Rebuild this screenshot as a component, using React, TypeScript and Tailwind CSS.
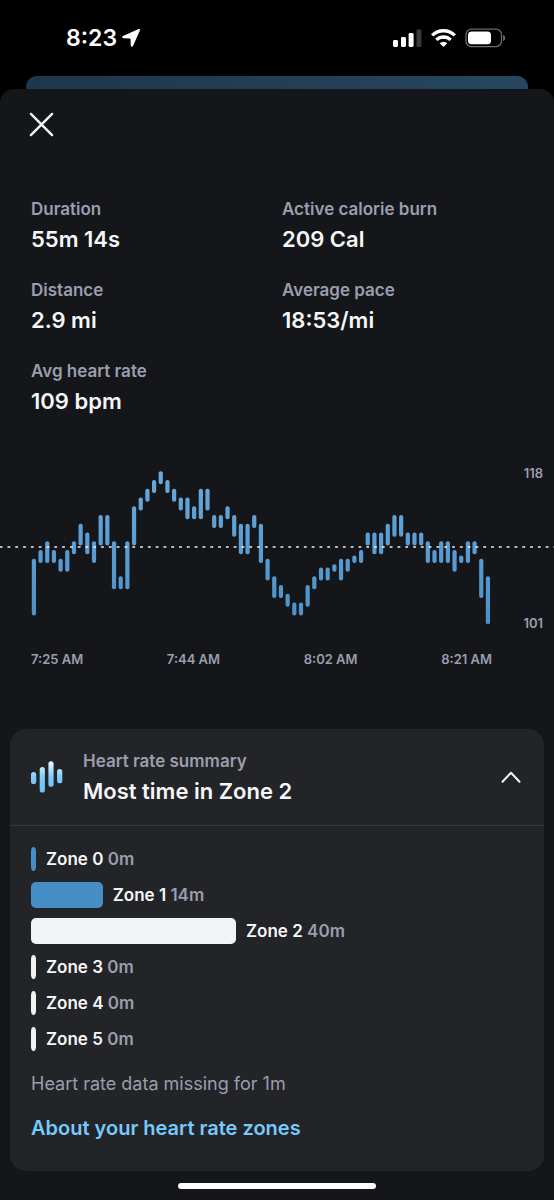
import { useState } from 'react'

interface Stat {
  label: string
  value: string
}

interface Zone {
  name: string
  minutes: number
  color: string
}

const stats: Stat[] = [
  { label: 'Duration', value: '55m 14s' },
  { label: 'Active calorie burn', value: '209 Cal' },
  { label: 'Distance', value: '2.9 mi' },
  { label: 'Average pace', value: '18:53/mi' },
  { label: 'Avg heart rate', value: '109 bpm' },
]

const zones: Zone[] = [
  { name: 'Zone 0', minutes: 0, color: 'bg-[#458fc6]' },
  { name: 'Zone 1', minutes: 14, color: 'bg-[#458fc6]' },
  { name: 'Zone 2', minutes: 40, color: 'bg-[#f2f3f5]' },
  { name: 'Zone 3', minutes: 0, color: 'bg-[#f2f3f5]' },
  { name: 'Zone 4', minutes: 0, color: 'bg-[#f2f3f5]' },
  { name: 'Zone 5', minutes: 0, color: 'bg-[#f2f3f5]' },
]

// [high, low] bpm for every interval of the workout
const heartRate: [number, number][] = [
  [108, 102], [109, 108], [110, 108], [109, 108], [108, 107], [109, 107], [110, 109], [112, 110],
  [111, 109], [110, 108], [113, 110], [113, 110], [110, 105], [106, 105], [110, 105], [114, 110],
  [115, 114], [116, 115], [117, 116], [118, 117], [117, 116], [116, 115], [115, 114], [115, 113],
  [114, 113], [116, 113], [116, 114], [113, 112], [113, 112], [114, 113], [113, 111], [112, 109],
  [112, 109], [113, 112], [112, 108], [108, 106], [106, 104], [105, 104], [104, 103], [103, 102],
  [103, 102], [105, 103], [106, 105], [107, 106], [107, 106], [107, 107], [108, 106], [108, 107],
  [108, 108], [109, 108], [111, 110], [111, 109], [111, 109], [112, 110], [113, 111], [113, 111],
  [111, 110], [111, 110], [111, 110], [110, 108], [109, 108], [110, 108], [110, 108], [109, 107],
  [108, 108], [110, 108], [110, 109], [108, 104], [106, 101],
]

const times = ['7:25 AM', '7:44 AM', '8:02 AM', '8:21 AM']

const MAX_BPM = 118
const BPM_STEP = 8.75
const BAR_STEP = 6.677

function StatusBar() {
  return (
    <div className="flex h-[76px] items-center justify-between pl-[66px] pr-12">
      <div className="flex items-center gap-1 text-[23px] font-semibold leading-7 text-white">
        <span>8:23</span>
        <svg width="20" height="20" viewBox="0 0 20 20" fill="white" aria-hidden="true">
          <path d="M17.6 1.1 2 8.1c-1.2.6-.9 2.1.4 2.2l6.6.3c.3 0 .5.2.5.5l.3 6.6c.1 1.3 1.7 1.6 2.2.4l6.9-15.6c.4-1-.3-1.8-1.3-1.4Z" />
        </svg>
      </div>
      <div className="flex items-center">
        <svg width="29" height="20" viewBox="0 0 29 20" fill="white" aria-hidden="true">
          <rect x="0" y="12" width="5" height="7" rx="1.4" />
          <rect x="8" y="9" width="5" height="10" rx="1.4" />
          <rect x="15.6" y="5" width="5" height="14" rx="1.4" />
          <rect x="23.5" y="1.5" width="5" height="17.5" rx="1.4" fill="#38383a" />
        </svg>
        <svg className="ml-[9px]" width="25" height="20" viewBox="0 0 25 20" fill="none" stroke="white" strokeWidth="3.4" aria-hidden="true">
          <path d="M1.2 7.4a16 16 0 0 1 22.6 0" />
          <path d="M5.4 11.9a10 10 0 0 1 14.2 0" />
          <path d="M12.5 19 8.7 15.2a5.4 5.4 0 0 1 7.6 0Z" fill="white" stroke="none" />
        </svg>
        <svg className="ml-[9px]" width="41" height="20" viewBox="0 0 41 20" fill="none" aria-hidden="true">
          <rect x="1" y="1.2" width="35.5" height="17.4" rx="5.4" stroke="#6b6b6b" strokeWidth="1.3" />
          <rect x="3" y="3.5" width="23" height="12.8" rx="3.6" fill="white" />
          <path d="M38.2 7v6c1.3-.5 1.9-1.6 1.9-3s-.6-2.5-1.9-3Z" fill="#757575" />
        </svg>
      </div>
    </div>
  )
}

function HeartRateChart() {
  return (
    <section aria-label="Heart rate" className="mt-12">
      <div className="grid">
        <svg className="col-start-1 row-start-1 w-full" viewBox="0 0 554 170" aria-hidden="true">
          <defs>
            <linearGradient id="bars" gradientUnits="userSpaceOnUse" x1="0" y1="8" x2="0" y2="162">
              <stop offset="0" stopColor="#6aa9dc" />
              <stop offset="1" stopColor="#4a90c8" />
            </linearGradient>
          </defs>
          {heartRate.map(([high, low], i) => {
            const bottom = 12.5 + (MAX_BPM - low) * BPM_STEP
            const height = Math.max((high - low) * BPM_STEP + 4.3, 7.5)
            return (
              <rect
                key={i}
                x={31.8 + i * BAR_STEP}
                y={bottom - height}
                width="4.2"
                height={height}
                rx="2"
                fill="url(#bars)"
              />
            )
          })}
          <line x1="0" y1="84" x2="554" y2="84" stroke="#eef0f2" strokeWidth="1.6" strokeDasharray="2.8 5" strokeDashoffset="0.3" />
        </svg>
        <div className="col-start-1 row-start-1 flex flex-col items-end justify-between pr-[11px] text-[13px] leading-5 font-semibold text-[#9a9eae]">
          <span>118</span>
          <span>101</span>
        </div>
      </div>
      <div className="mt-4 flex justify-between pl-[31px] pr-[62px] text-[13px] leading-5 font-semibold text-[#9a9eae]">
        {times.map((time) => (
          <span key={time}>{time}</span>
        ))}
      </div>
    </section>
  )
}

function ZoneRow({ zone }: { zone: Zone }) {
  return (
    <li className="flex h-[26px] items-center gap-[10px]">
      <div
        className={`min-w-[5px] shrink-0 ${zone.minutes > 0 ? 'h-[26px] rounded-[5px]' : 'h-6 rounded-[50%/20%]'} ${zone.color}`}
        style={{ width: `${zone.minutes / 0.96}%` }}
      />
      <p className="whitespace-nowrap text-[17px] leading-6 font-semibold text-[#f5f6f8]">
        {zone.name} <span className="text-[#9a9eae]">{zone.minutes}m</span>
      </p>
    </li>
  )
}

function HeartRateSummary() {
  const [open, setOpen] = useState(true)

  return (
    <section className="mx-[10px] mt-[60px] rounded-2xl bg-[#232428]">
      <button
        type="button"
        aria-expanded={open}
        onClick={() => setOpen(!open)}
        className="flex h-24 w-full items-center px-[21px] text-left"
      >
        <svg width="32" height="32" viewBox="0 0 32 32" aria-hidden="true">
          <defs>
            <linearGradient id="pulse" gradientUnits="userSpaceOnUse" x1="0" y1="0" x2="0" y2="31">
              <stop offset="0" stopColor="#f4f7fc" />
              <stop offset="0.5" stopColor="#7fcdfa" />
              <stop offset="1" stopColor="#6cc3f7" />
            </linearGradient>
          </defs>
          <g fill="url(#pulse)">
            <rect x="0" y="11" width="5.2" height="12" rx="2.6" />
            <rect x="8.7" y="6" width="5.2" height="25.5" rx="2.6" />
            <rect x="17.4" y="0.3" width="5.2" height="25.5" rx="2.6" />
            <rect x="26.1" y="8" width="5.2" height="14.3" rx="2.6" />
          </g>
        </svg>
        <span className="ml-5 flex-1">
          <span className="block text-[17px] leading-6 font-semibold text-[#9a9eae]">Heart rate summary</span>
          <span className="mt-1 block text-[22px] leading-7 font-semibold text-[#f5f6f8]">Most time in Zone 2</span>
        </span>
        <svg
          className={open ? '' : 'rotate-180'}
          width="24"
          height="24"
          viewBox="0 0 24 24"
          fill="none"
          stroke="#f5f6f8"
          strokeWidth="2"
          strokeLinecap="round"
          strokeLinejoin="round"
          aria-hidden="true"
        >
          <path d="m3.5 16.7 8.5-9 8.5 9" />
        </svg>
      </button>

      {open && (
        <div className="border-t border-[#36373c] px-[21px] pt-5 pb-[31px]">
          <ul className="space-y-[10px]">
            {zones.map((zone) => (
              <ZoneRow key={zone.name} zone={zone} />
            ))}
          </ul>
          <p className="mt-5 text-lg leading-6 text-[#9a9eae]">Heart rate data missing for 1m</p>
          <a href="#zones" className="mt-5 block text-xl leading-6 font-semibold text-[#75cbfb]">
            About your heart rate zones
          </a>
        </div>
      )}
    </section>
  )
}

export default function App() {
  return (
    <div className="flex min-h-screen flex-col bg-black font-['Inter',sans-serif]">
      <StatusBar />
      <div className="mx-[26px] h-[13px] rounded-t-[11px] bg-linear-to-r from-[#1d374c] to-[#26475f]" />
      <main className="flex flex-1 flex-col rounded-t-[14px] bg-[#15161a]">
        <div className="px-[29px] pt-[23px]">
          <button type="button" aria-label="Close" className="block">
            <svg width="25" height="25" viewBox="0 0 25 25" fill="none" stroke="#f5f6f8" strokeWidth="2.4" strokeLinecap="round" aria-hidden="true">
              <path d="m1.900 1.900 21.200 21.200M23.100 1.900 1.900 23.100" />
            </svg>
          </button>
        </div>

        <dl className="mt-[60px] grid grid-cols-2 gap-x-[10px] gap-y-[25px] px-[31px]">
          {stats.map((stat) => (
            <div key={stat.label}>
              <dt className="text-[17px] leading-6 font-semibold text-[#9a9eae]">{stat.label}</dt>
              <dd className="mt-1 text-[22px] leading-7 font-semibold text-[#f5f6f8]">{stat.value}</dd>
            </div>
          ))}
        </dl>

        <HeartRateChart />
        <HeartRateSummary />

        <div className="mx-auto mt-3 mb-[11px] h-[6px] w-[198px] rounded-full bg-white" />
      </main>
    </div>
  )
}
